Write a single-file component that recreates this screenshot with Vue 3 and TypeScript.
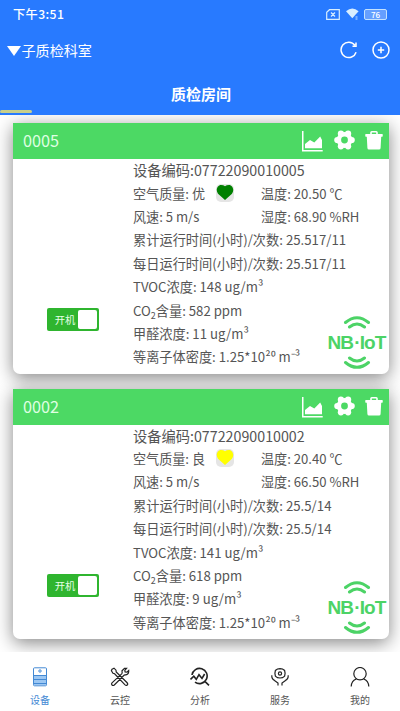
<script setup lang="ts">
interface Device {
  id: string
  code: string
  quality: string
  heart: string
  wind: string
  temperature: string
  humidity: string
  hours: string
  tvoc: number
  co2: number
  formaldehyde: number
}

const devices: Device[] = [
  { id: '0005', code: '07722090010005', quality: '优', heart: '#008000', wind: '5 m/s', temperature: '20.50 ℃', humidity: '68.90 %RH', hours: '25.517/11', tvoc: 148, co2: 582, formaldehyde: 11 },
  { id: '0002', code: '07722090010002', quality: '良', heart: '#ffff00', wind: '5 m/s', temperature: '20.40 ℃', humidity: '66.50 %RH', hours: '25.5/14', tvoc: 141, co2: 618, formaldehyde: 9 },
]
</script>

<template>
  <div class="screen">
    <header class="top">
      <div class="status">
        <span class="clock">下午3:51</span>
        <svg class="sim" width="14" height="11" viewBox="0 0 14 11"><path d="M3.5.7H13.3V10.3H.7V3.3Z M5 3.5 9 7.5M9 3.5 5 7.5" /></svg>
        <svg class="wifi" width="14" height="12" viewBox="0 0 14 12"><path d="M0 3.2Q6.3-2.2 12.6 3.2L6.3 10.2Z" /><path class="faint" d="M9.5 8h2v4h-2z" /></svg>
        <div class="battery">76</div>
      </div>
      <div class="nav">
        <svg width="14" height="10" viewBox="0 0 14 10"><path d="M0 0H14L7 10Z" fill="#fff" /></svg>
        <span class="dept">子质检科室</span>
        <svg class="refresh" width="18" height="18" viewBox="0 0 18 18"><path d="M16.1 11.2A7.7 7.7 0 1 1 14.9 4.2M16 1.5V5.2H12.5" /></svg>
        <svg width="18" height="18" viewBox="0 0 18 18"><circle cx="9" cy="9" r="8" /><path d="M9 5.8V12.2M5.8 9H12.2" stroke-width="2" /></svg>
      </div>
      <h1>质检房间</h1>
      <div class="indicator"></div>
    </header>

    <main>
      <section v-for="d in devices" :key="d.id" class="card">
        <div class="card-head">
          <span>{{ d.id }}</span>
          <svg class="chart" width="21" height="21" viewBox="0 0 21 21"><path d="M0 0H1.5V19H20.7V20.5H0Z M3 17.3V13L8 9 12.3 11.5 18.2 5.5 20 9V17.3Z" /></svg>
          <svg class="gear" width="21" height="20" viewBox="0 0 21 20"><circle cx="10.5" cy="10" r="7.9" /><g><circle cx="3.3" cy="10" r="3.1" /><circle cx="17.7" cy="10" r="3.1" /><circle cx="6.9" cy="3.7" r="3.1" /><circle cx="14.1" cy="3.7" r="3.1" /><circle cx="6.9" cy="16.3" r="3.1" /><circle cx="14.1" cy="16.3" r="3.1" /></g><circle class="hole" cx="10.5" cy="10" r="3.4" /></svg>
          <svg class="trash" width="18" height="19" viewBox="0 0 18 19"><path fill-rule="evenodd" d="M5.2 3V1.6Q5.2 0 6.8 0H11.2Q12.8 0 12.8 1.6V3H17Q18 3 17.8 4.2L17.5 5.7H16.2L15.6 17Q15.5 18.5 14 18.5H4Q2.5 18.5 2.4 17L1.8 5.7H.5L.2 4.2Q0 3 1 3ZM6.8 3H11.2V1.5H6.8Z" /></svg>
        </div>
        <div class="card-body">
          <div class="side"><div class="switch"><span>开机</span><i></i></div></div>
          <div class="info">
            <p class="code">设备编码:{{ d.code }}</p>
            <div class="pair">
              <p>空气质量: {{ d.quality }}</p>
              <span class="heart"><svg width="18" height="18" viewBox="0 0 18 18"><path :fill="d.heart" d="M9 16 2 9.7C-.8 6 1.5 1 5 1Q7.5 1 9 2.3 10.5 1 13 1C16.5 1 18.8 6 16 9.7Z" /></svg></span>
              <p class="right">温度: {{ d.temperature }}</p>
            </div>
            <div class="pair"><p>风速: {{ d.wind }}</p><p class="right">湿度: {{ d.humidity }}</p></div>
            <p class="hours">累计运行时间(小时)/次数: {{ d.hours }}</p>
            <p class="hours">每日运行时间(小时)/次数: {{ d.hours }}</p>
            <p class="reading">TVOC浓度: {{ d.tvoc }} ug/m³</p>
            <p class="reading">CO<span class="sub">2</span>含量: {{ d.co2 }} ppm</p>
            <p class="reading">甲醛浓度: {{ d.formaldehyde }} ug/m³</p>
            <p class="reading">等离子体密度: 1.25*10²⁰ m⁻³</p>
          </div>
          <div class="nbiot">
            <svg width="28" height="13" viewBox="0 0 28 13"><path d="M2.5 6.5Q14-3.1 25.5 6.5M6.5 11Q14 5 21.5 11" /></svg>
            <span>NB<b>·</b>IoT</span>
            <svg width="28" height="13" viewBox="0 0 28 13"><path d="M2.5 6.5Q14 16.1 25.5 6.5M6.5 2Q14 8 21.5 2" /></svg>
          </div>
        </div>
      </section>
    </main>

    <nav class="tabs">
      <div class="tab active">
        <svg viewBox="0 0 20 20"><rect x="3.5" y=".8" width="13" height="18" rx="1" /><rect x="4" y="9" width="12" height="9" class="tint" /><circle cx="10" cy="4" r="1.2" /><path d="M3.5 8.5H16.5M4 12.5H16M4 16.5H16" /></svg>
        <span>设备</span>
      </div>
      <div class="tab">
        <svg viewBox="0 0 20 20"><path d="M2 2.2 4 1.2 6 3.2 6.2 5 16.9 15.5Q18.5 17.2 17 18.2 16 18.8 14.8 17.6L4.6 6.8 3 6.3 1.4 3.8ZM12.2 6.4 12 3.8 14.5 1.4 16.5 1.3 14.8 3.3 15.1 5 16.9 5.2 18.7 3.5Q19 6.5 16.6 7.7L14.2 8.1 4.3 18Q3 19 2 18 1 17 2 15.8L12.2 6.4" /></svg>
        <span>云控</span>
      </div>
      <div class="tab">
        <svg viewBox="0 0 20 20" class="bold"><path d="M2 8A7.6 7.6 0 1 1 5 15.1M14.6 14.1 19 18.4M.5 12.5 3.8 9.2 6.3 12.3 9 7.7 12 11.4 14.6 7" /></svg>
        <span>分析</span>
      </div>
      <div class="tab">
        <svg viewBox="0 0 20 20"><path d="M10 1.6 12.5 2 14.6 3.4 15.1 6.3 14.6 9.2 12.5 10.7 10 11 7.5 10.7 5.4 9.2 4.9 6.3 5.4 3.4 7.5 2Z" /><circle cx="10" cy="6.5" r="1.6" /><path d="M1.8 8.2Q1.5 12 4.5 13.4L8 16V18.5M18.2 8.2Q18.5 12 15.5 13.4L12 16V18.5" /></svg>
        <span>服务</span>
      </div>
      <div class="tab">
        <svg viewBox="0 0 20 20"><circle cx="10" cy="6.7" r="6.2" /><path d="M1.2 19.5Q1.5 13.5 6.5 12M18.8 19.5Q18.5 13.5 13.5 12" /></svg>
        <span>我的</span>
      </div>
    </nav>
  </div>
</template>

<style>
body { margin: 0; overflow: hidden; }
</style>

<style scoped>
* { box-sizing: border-box; }
svg { display: block; flex: none; }
p, h1 { margin: 0; }
.screen {
  display: flex; flex-direction: column; width: 400px; height: 711px; overflow: hidden;
  background: #fff; color: #555; white-space: nowrap;
  font-family: "Noto Sans CJK SC", sans-serif;
}
.top { flex: none; height: 115px; background: #287aff; color: #fff; display: flex; flex-direction: column; }
.status { height: 28px; padding: 0 13px; display: flex; align-items: center; }
.clock { flex: 1; font-size: 12.2px; font-weight: 500; letter-spacing: .4px; line-height: 28px; }
.sim path { fill: none; stroke: #d8eeff; stroke-width: 1.2; }
.wifi { margin-left: 6px; fill: #d8eeff; }
.faint { opacity: .45; }
.battery {
  width: 23px; height: 11px; margin-left: 4px; border: 1px solid #c3e2ff; border-radius: 2px;
  background: #659fff; font-size: 8px; font-weight: 500; line-height: 9px; text-align: center;
}
.nav { height: 44px; padding: 0 10px 0 7px; display: flex; align-items: center; }
.dept { flex: 1; margin-left: .5px; font-size: 14.1px; line-height: 44px; }
.nav svg path, .nav svg circle { stroke: #fff; stroke-width: 1.5; fill: none; }
.nav svg:first-child path { fill: #fff; stroke: none; }
.nav svg:first-child { margin-top: 2px; }
.refresh { margin-right: 14px; }
h1 { height: 38px; margin-left: 2px; text-align: center; font-size: 15px; font-weight: 700; line-height: 43px; }
.indicator { width: 32px; height: 3px; border-radius: 2px; background: #c8cf8c; }
main { flex: 1; min-height: 0; overflow: hidden; padding: 8px 11.5px 0 13px; display: flex; flex-direction: column; gap: 15px; }
.card { flex: none; height: 250.5px; border-radius: 0 0 7px 7px; background: #fff; box-shadow: 0 4px 18px rgba(0, 0, 0, .48); }
.card-head { height: 36px; padding: 0 6px 0 10px; background: #4cd964; color: #fff; display: flex; align-items: flex-start; fill: #fff; }
.card-head span { flex: 1; font-size: 16.3px; line-height: 35px; color: #dfffe2; }
.chart { margin-top: 8px; }
.gear { margin: 7px 10px 0 11px; }
.gear .hole { fill: #4cd964; }
.trash { margin-top: 8px; }
.card-body { position: relative; display: flex; }
.side { width: 120px; padding: 149px 0 0 34px; }
.info { flex: 1; font-size: 13.1px; line-height: 23.4px; }
.info p { height: 23.4px; }
.info .code { font-size: 14.25px; height: 22.6px; line-height: 22px; }
.info .hours { font-size: 13.22px; }
.info .reading { font-size: 13.2px; }
.pair { position: relative; display: flex; height: 23.4px; }
.pair .right { position: absolute; left: 128px; }
.heart { width: 18px; height: 18px; margin: 2px 0 0 11px; border-radius: 5px; background: #e5e5e5; }
.sub { display: inline-block; font-size: 9px; line-height: 10px; transform: translateY(3px); }
.switch { width: 52px; height: 23px; padding: 2px; border-radius: 2px; background: #2fb52f; display: flex; align-items: center; }
.switch span { flex: 1; text-align: center; color: #e4ffe4; font-size: 10.3px; line-height: 19px; padding-left: 3px; }
.switch i { width: 19px; height: 19px; border-radius: 2px; background: #fff; }
.nbiot { position: absolute; right: 2px; top: 156.5px; width: 60px; display: flex; flex-direction: column; align-items: center; color: #4cd366; }
.nbiot path { fill: none; stroke: currentColor; stroke-width: 3; stroke-linecap: round; }
.nbiot span { height: 27px; font: 700 19px/28px "Liberation Sans", sans-serif; letter-spacing: -.9px; }
.nbiot b { margin: 0 0 0 1px; }
.tabs { flex: none; height: 59px; display: grid; grid-template-columns: repeat(5, 1fr); background: #fff; position: relative; }
.tab { display: flex; flex-direction: column; align-items: center; padding-top: 15px; font-size: 10px; line-height: 14px; }
.tab svg { width: 20px; height: 20px; margin-bottom: 5.5px; fill: none; stroke: #222; stroke-width: 1.2; }
.tab svg.bold { stroke-width: 1.6; }
.tab.active { color: #4389d4; }
.tab.active svg { stroke: #4389d4; stroke-width: 1; }
.tab .tint { fill: #9cc7f3; stroke: none; }
</style>
